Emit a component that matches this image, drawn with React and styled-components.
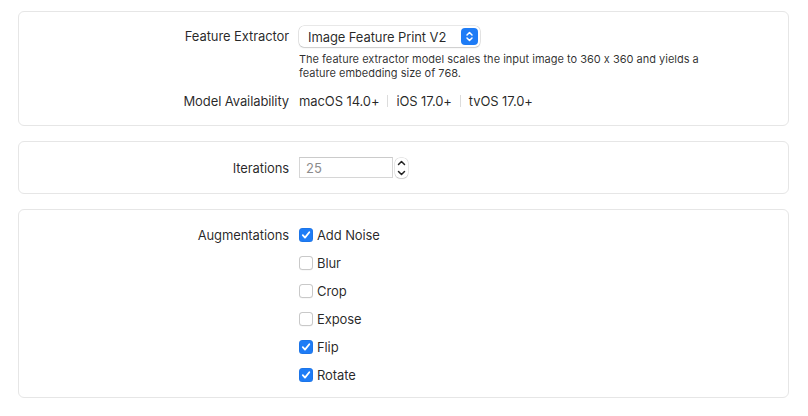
import React from "react";
import styled, { createGlobalStyle } from "styled-components";

const Global = createGlobalStyle`
  html, body { margin: 0; padding: 0; background: #ffffff; }
  body {
    font-family: Inter, "Helvetica Neue", "Liberation Sans", sans-serif;
    font-feature-settings: "calt" 0;
    color: rgba(0,0,0,0.85);
    -webkit-font-smoothing: antialiased;
  }
`;

const Page = styled.div`
  width: 808px;
  height: 416px;
  box-sizing: border-box;
  padding: 11px 19px 0 18px;
  display: flex;
  flex-direction: column;
  gap: 15px;
`;

const Card = styled.section`
  border: 1px solid #e6e6e6;
  border-radius: 6px;
  background: #fff;
  padding: ${(p) => p.$pad || "14px 0"};
  display: flex;
  flex-direction: column;
  gap: ${(p) => p.$gap || 0}px;
`;

const Row = styled.div`
  display: grid;
  grid-template-columns: 270px 1fr;
  column-gap: 10px;
  align-items: ${(p) => p.$align || "center"};
  min-height: ${(p) => p.$h || 21}px;
`;

const Label = styled.div`
  text-align: right;
  font-size: 13px;
  line-height: 16px;
  letter-spacing: -0.1px;
  color: rgba(0,0,0,0.85);
  margin-top: ${(p) => p.$top || 0}px;
`;

const Stack = styled.div`
  display: flex;
  flex-direction: column;
`;

const Popup = styled.div`
  width: 181px;
  height: 21px;
  box-sizing: border-box;
  border-radius: 5px;
  background: #fff;
  box-shadow: 0 0 0 0.5px rgba(0,0,0,0.18), 0 1px 1.5px rgba(0,0,0,0.12);
  display: flex;
  align-items: center;
  justify-content: space-between;
  padding: 0 2px 0 9px;
  font-size: 13px;
  letter-spacing: -0.1px;
`;

const PopupArrows = styled.div`
  width: 17px;
  height: 17px;
  border-radius: 4px;
  background: #1e7cf6;
  display: flex;
  align-items: center;
  justify-content: center;
`;

const Description = styled.p`
  margin: 6px 0 0;
  font-size: 11px;
  line-height: 13.5px;
  color: rgba(0,0,0,0.82);
  width: 420px;
`;

const Platforms = styled.div`
  display: flex;
  align-items: center;
  font-size: 13px;
  letter-spacing: -0.1px;
`;

const Sep = styled.span`
  width: 1px;
  height: 12px;
  background: #dcdcdc;
  margin: 0 8px;
`;

const FieldGroup = styled.div`
  display: flex;
  align-items: center;
  gap: 2px;
`;

const TextField = styled.div`
  width: 94px;
  height: 21px;
  box-sizing: border-box;
  border: 1px solid #d6d6d6;
  border-top-color: #cbcbcb;
  display: flex;
  align-items: center;
  padding-left: 6px;
  font-size: 13px;
  color: #8c8c8c;
`;

const Stepper = styled.div`
  width: 13px;
  height: 20px;
  border-radius: 5px;
  box-shadow: 0 0 0 0.5px rgba(0,0,0,0.18), 0 1px 1px rgba(0,0,0,0.1);
  display: flex;
  flex-direction: column;
  align-items: center;
  justify-content: space-around;
  background: #fff;
`;

const CheckList = styled.div`
  display: flex;
  flex-direction: column;
  gap: 8px;
`;

const CheckRow = styled.label`
  display: flex;
  align-items: center;
  gap: 4px;
  height: 20px;
  font-size: 13px;
  letter-spacing: -0.1px;
`;

const Box = styled.span`
  width: 14px;
  height: 14px;
  box-sizing: border-box;
  border-radius: 3.5px;
  display: flex;
  align-items: center;
  justify-content: center;
  background: ${(p) => (p.$on ? "#1e7cf6" : "#fff")};
  box-shadow: ${(p) =>
    p.$on
      ? "inset 0 0 0 0.5px rgba(0,0,0,0.1)"
      : "inset 0 0 0 1px #c9c9c9, 0 0.5px 0.5px rgba(0,0,0,0.06)"};
`;

const Chevrons = ({ color = "#fff" }) => (
  <svg width="9" height="13" viewBox="0 0 9 13">
    <path d="M2 5 L4.5 2.5 L7 5" fill="none" stroke={color} strokeWidth="1.5" strokeLinecap="round" strokeLinejoin="round" />
    <path d="M2 8 L4.5 10.5 L7 8" fill="none" stroke={color} strokeWidth="1.5" strokeLinecap="round" strokeLinejoin="round" />
  </svg>
);

const Chevron = ({ up }) => (
  <svg width="9" height="6" viewBox="0 0 9 6">
    <path
      d={up ? "M1.5 4.5 L4.5 1.5 L7.5 4.5" : "M1.5 1.5 L4.5 4.5 L7.5 1.5"}
      fill="none"
      stroke="#222"
      strokeWidth="1.5"
      strokeLinecap="round"
      strokeLinejoin="round"
    />
  </svg>
);

const Check = () => (
  <svg width="10" height="10" viewBox="0 0 10 10">
    <path d="M1.8 5.2 L4 7.6 L8.3 2.2" fill="none" stroke="#fff" strokeWidth="1.8" strokeLinecap="round" strokeLinejoin="round" />
  </svg>
);

const augmentations = [
  ["Add Noise", true],
  ["Blur", false],
  ["Crop", false],
  ["Expose", false],
  ["Flip", true],
  ["Rotate", true],
];

export default function App() {
  return (
    <>
      <Global />
      <Page>
        <Card $pad="14px 0 14px" $gap={10}>
          <Row $align="start">
            <Label $top={2}>Feature Extractor</Label>
            <Stack>
              <Popup>
                <span>Image Feature Print V2</span>
                <PopupArrows>
                  <Chevrons />
                </PopupArrows>
              </Popup>
              <Description>
                The feature extractor model scales the input image to 360 x 360 and yields a feature embedding size of 768.
              </Description>
            </Stack>
          </Row>
          <Row>
            <Label>Model Availability</Label>
            <Platforms>
              <span>macOS 14.0+</span>
              <Sep />
              <span>iOS 17.0+</span>
              <Sep />
              <span>tvOS 17.0+</span>
            </Platforms>
          </Row>
        </Card>
        <Card $pad="15px 0 15px">
          <Row>
            <Label>Iterations</Label>
            <FieldGroup>
              <TextField>25</TextField>
              <Stepper>
                <Chevron up />
                <Chevron />
              </Stepper>
            </FieldGroup>
          </Row>
        </Card>
        <Card $pad="15px 0 12px">
          <Row $align="start">
            <Label $top={2}>Augmentations</Label>
            <CheckList>
              {augmentations.map(([name, on]) => (
                <CheckRow key={name}>
                  <Box $on={on}>{on && <Check />}</Box>
                  <span>{name}</span>
                </CheckRow>
              ))}
            </CheckList>
          </Row>
        </Card>
      </Page>
    </>
  );
}
